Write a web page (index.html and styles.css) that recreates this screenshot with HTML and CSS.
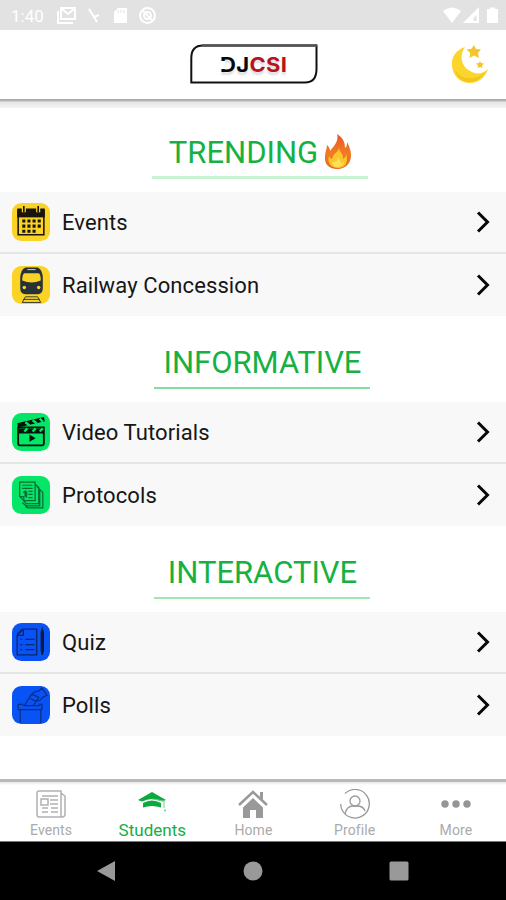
FILE: index.html
```html
<!DOCTYPE html>
<html lang="en">
<head>
<meta charset="utf-8">
<title>DJCSI Students</title>
<link rel="stylesheet" href="styles.css">
</head>
<body>
<div class="status">
  <span class="time">1:40</span>
  <svg class="status-left" width="102" height="18" viewBox="56 7 102 18" fill="none" stroke="#fff" stroke-width="2">
    <path d="M58 11v12h15"/><rect x="61" y="8" width="14" height="11"/><path d="M62 9l6 5 6-5"/>
    <path d="M89 9l8 13M94 17l5-2" stroke-width="2.2"/>
    <path d="M118 8h9v15h-13V12z" fill="#fff" stroke="none"/><path d="M118 10v3M121 10v3M124 10v3" stroke="#e2e2e2" stroke-width="1"/>
    <circle cx="147.500" cy="15.500" r="7.500"/><circle cx="147.500" cy="15.500" r="3.500"/><path d="M143 11l9 9"/>
  </svg>
  <svg class="status-right" width="56" height="18" viewBox="443 7 56 18" fill="#fff">
    <path d="M443 11q9-7 18 0l-9 12z"/><path fill-rule="evenodd" d="M479 7v16h-16zM476.500 15v6h-3v-3z"/><path d="M487 9h3V7.500h5V9h3v14h-11z"/>
  </svg>
</div>
<header class="header">
  <div class="logo">
    <svg class="logo-frame" width="128" height="40" viewBox="0 0 128 40" fill="none"><path d="M1.300 38.500V14Q1.300 1.500 13 1.500H126.500V25Q126.500 38.500 115 38.500Z" stroke="#111" stroke-width="2"/><path d="M12 1.500h115" stroke="#555" stroke-width="2.500"/></svg>
    <span class="wordmark"><span class="dj">DJ</span><span class="csi">CSI</span></span>
  </div>
  <svg class="moon" width="38" height="40" viewBox="451 44 38 40">
    <path d="M465 47C456 50 451 57 452 66c1 10 8 17 18 17 8 0 15-5 18-14-5 5-12 6-18 2-9-5-11-15-5-24z" fill="#fbd52c"/>
    <path d="M455 69c3 7 10 10 17 9 6 0 10-3 13-7-2 6-8 11-15 11-8 0-14-5-15-13z" fill="#f5c51b"/>
    <path d="M474 45l2 4 5 .5-3 3.500 1 5-5-2.500-4.500 2.500.7-5-3.700-3.500 5-.7z" fill="#f4c52c"/><path d="M480 61l1 2 3 .5-2 2 .5 2.500-2.500-1-2.500 1 .5-2.500-2-2 3-.5z" fill="#f4c52c"/>
  </svg>
</header>
<main class="content">
  <section>
    <h2 class="trending"><span>TRENDING</span>
      <svg width="28" height="36" viewBox="0 0 28 36"><defs><linearGradient id="flame" x1="0" y1="0" x2="0" y2="1"><stop stop-color="#e9572a"/><stop offset=".55" stop-color="#f27b22"/><stop offset="1" stop-color="#e66a1c"/></linearGradient></defs><path d="M13 0c6 4 8 8 8 14 2-1 2-4 2-6 5 9 5 16 2 21-3 4-7 6-12 6C5 35 0 30 1 22c0-4 2-7 2-11 2 2 3 4 3 6C10 12 15 7 13 0z" fill="url(#flame)"/><path d="M15 13c0 5 5 7 4 12 2-1 3-3 3-5 3 8-1 14-8 14S3 29 5 22c1 2 2 3 3 3 1-6 7-7 7-12z" fill="#fcc52e"/><path d="M14 22c1 4 3 4 3 8l3-3c-1 8-11 8-12 1 4 1 6-2 6-6z" fill="#ffdf55"/></svg>
    </h2>
    <ul>
      <li><svg class="tile" viewBox="0 0 37 37"><rect width="37" height="37" rx="9" fill="#fbd324"/><path d="M6 6h25v25H6z" fill="none" stroke="#17150c" stroke-width="1.500"/><path d="M5 6h27v8H5z" fill="#17150c"/><path d="M11.500 3v6M25.500 3v6" stroke="#fbd324" stroke-width="4"/><path d="M11.500 3v6M25.500 3v6" stroke="#17150c" stroke-width="1.600"/><path d="M10 17.500h19M10 22.500h19M10 27.500h14" stroke="#17150c" stroke-width="3" stroke-dasharray="3 2"/></svg><span>Events</span><svg class="chev" viewBox="0 0 14 22"><path d="M2 1.500l9.500 9.500L2 20.500"/></svg></li>
      <li><svg class="tile" viewBox="0 0 37 37"><rect width="37" height="37" rx="9" fill="#fbd324"/><path d="M13 1.500h12q5 2 5 11v9q0 6-5 6H13q-5 0-5-6v-9q0-9 5-11z" fill="#263139"/><path d="M12 7h14q2 1 2 7-9 4-18 0 0-6 2-7z" fill="#fbd324"/><path d="M15 3.500h8" stroke="#fbd324"/><circle cx="12" cy="21" r="1.700" fill="#fbd324"/><circle cx="26" cy="21" r="1.700" fill="#fbd324"/><path d="M13 30h12M11 32.500h16M10 35.500h18M13 30l-3 5.500M25 30l3 5.500" stroke="#263139" stroke-width=".9"/></svg><span>Railway Concession</span><svg class="chev" viewBox="0 0 14 22"><path d="M2 1.500l9.500 9.500L2 20.500"/></svg></li>
    </ul>
  </section>
  <section>
    <h2 class="informative"><span>INFORMATIVE</span></h2>
    <ul>
      <li><svg class="tile" viewBox="0 0 37 37"><rect width="37" height="37" rx="9" fill="#05e568"/><path d="M6 14h25v16q0 1.500-1.500 1.500h-22Q6 31.500 6 30zM6 19h25" fill="none" stroke="#06130b" stroke-width="1.800"/><path d="M6 14l-1-4 26-6 1 4-21 5z" fill="#06130b"/><path d="M6 15h25v4H6z" fill="#06130b"/><path d="M13 9l4 3M20 7l4 3M27 5.500l3 3M12 18l3-3M20 18l3-3M27 18l3-3" stroke="#05e568" stroke-width="2.300"/><path d="M17 21l6 3.500-6 3.500z" fill="#06130b"/></svg><span>Video Tutorials</span><svg class="chev" viewBox="0 0 14 22"><path d="M2 1.500l9.500 9.500L2 20.500"/></svg></li>
      <li><svg class="tile" viewBox="0 0 37 37"><rect width="37" height="37" rx="9" fill="#05e568"/><g fill="none" stroke="#086c36" stroke-width="1.200"><path d="M7.500 6h15v18h-11l-4-4zM7.500 20h4v4M10 26l4 3h13V13l-3-3M13 30l3 1h14V16l-3-3M22.500 8l3.500 3v16H14l-3-3M10 9h10M10 12h10M16 15h4M16 18h4M16 21h4"/><path d="M11 16l2-1v5M14 15v6" stroke-width="1.600"/></g></svg><span>Protocols</span><svg class="chev" viewBox="0 0 14 22"><path d="M2 1.500l9.500 9.500L2 20.500"/></svg></li>
    </ul>
  </section>
  <section>
    <h2 class="interactive"><span>INTERACTIVE</span></h2>
    <ul>
      <li><svg class="tile" viewBox="0 0 37 37"><rect width="37" height="37" rx="9" fill="#0952f4"/><g fill="none" stroke="#062974" stroke-width="1.300"><path d="M11 6h13v25H5V12zM11 6v6H5M8 16h2M8 21h2M8 26h2M13 16h9M13 21h9M13 26h9"/><path d="M5 11l5-5"/><path d="M29.500 6l1 3v18l-1 4-1-4V9z" fill="#071c47" stroke="#071c47"/></g></svg><span>Quiz</span><svg class="chev" viewBox="0 0 14 22"><path d="M2 1.500l9.500 9.500L2 20.500"/></svg></li>
      <li><svg class="tile" viewBox="0 0 37 37"><rect width="37" height="37" rx="9" fill="#0952f4"/><g fill="none" stroke="#062f88" stroke-width="1.200"><path d="M8 23v13M28 23v13M6 18h5M26 18h3v5H6v-5M11 19h16M12 19l7-11 7 3-5 8M18 10q3-5 8-5l3-3 5 7-4 2q-3 5-9 3l-3-2M21 9l4 1"/></g></svg><span>Polls</span><svg class="chev" viewBox="0 0 14 22"><path d="M2 1.500l9.500 9.500L2 20.500"/></svg></li>
    </ul>
  </section>
</main>
<nav class="tabs">
  <div class="tab"><svg viewBox="0 0 32 30"><g fill="none" stroke="#b1b1b1" stroke-width="1.500"><path d="M3 2h23v26H4q-2 0-2-3V4q0-2 2-2zM26 4l4 3v18q0 3-3 3h-4M7 7h16M15 11h8M15 15h8M16 19h7M16 23h7M7 19h6M7 23h6"/><rect x="6" y="10" width="7" height="6"/></g></svg><span>Events</span></div>
  <div class="tab active"><svg viewBox="0 0 32 30"><path d="M16 3l14 8-4 1.500q-10-5-20 0L2 11zM7 14q9-5 18 0v4.500q-9-3-18 0z" fill="#0caa3d"/><path d="M16 10l12 2v7" stroke="#75cf90" fill="none"/><circle cx="29" cy="21.500" r="1.100" fill="#75cf90"/></svg><span>Students</span></div>
  <div class="tab"><svg viewBox="0 0 32 30"><path d="M2 16L16 3l14 13" fill="none" stroke="#999" stroke-width="2.500"/><path d="M23 3h3v8l-3-3zM6 18.500l10-9.500 10 9.500V29h-7v-8h-6v8H6z" fill="#999"/></svg><span>Home</span></div>
  <div class="tab"><svg viewBox="0 0 32 30"><g fill="none" stroke="#999" stroke-width="1.300"><path d="M6 4.500A14.300 14.300 0 1 1 3.700 22M1.700 15q0 4 2 7"/><circle cx="16" cy="12" r="5"/><path d="M6 25c1-5 4-8 8-8h4c4 0 7 2 8 5"/></g></svg><span>Profile</span></div>
  <div class="tab"><svg viewBox="0 0 32 30" fill="#959595"><circle cx="5" cy="15" r="3.700"/><circle cx="16" cy="15" r="3.700"/><circle cx="27" cy="15" r="3.700"/></svg><span>More</span></div>
</nav>
<div class="system">
  <svg viewBox="0 0 22 22"><path d="M2 11L20 1v20z"/></svg>
  <svg viewBox="0 0 22 22"><circle cx="11" cy="11" r="9.500"/></svg>
  <svg viewBox="0 0 22 22"><rect x="1.500" y="1.500" width="19" height="19" rx="1.500"/></svg>
</div>
</body>
</html>
```
FILE: styles.css
```css
* { box-sizing: border-box; }
body { margin: 0; width: 506px; height: 900px; overflow: hidden; display: flex; flex-direction: column; background: #fff; color: #161616; font-family: Roboto, sans-serif; }
svg { display: block; flex: none; }
.status { height: 30px; background: #e2e2e2; display: flex; align-items: center; padding: 1px 7px 0 11px; color: #fff; }
.time { width: 45px; font-size: 17px; line-height: 28px; }
.status-right { margin-left: auto; }
.header { height: 78px; display: grid; grid-template-columns: 1fr 128px 1fr; align-items: start; padding: 14px 0 0 1px; background: linear-gradient(#fff 69px, #a8aaaa 69px, #b4b6b6 71px, #e5e5e5 72px, #f4f4f4 78px); }
.logo { grid-column: 2; position: relative; height: 40px; }
.logo-frame { position: absolute; inset: 0; }
.wordmark { position: absolute; left: 30px; top: 9px; font: 700 20px/24px Inter, sans-serif; letter-spacing: .3px; white-space: nowrap; text-shadow: 0 3px 2px #ddd; transform: scaleX(1.1); transform-origin: left; }
.dj { color: #080808; }
.csi { color: #b7131c; }
.dj::before { content: ""; position: absolute; left: 0; top: 8px; width: 5px; height: 8px; background: #fff; }
.moon { justify-self: end; margin-right: 17px; }
.content { height: 671px; }
section { height: 210px; }
h2 { margin: 0 auto; width: 216px; height: 71px; padding: 27px 0 0 1px; font-size: 31px; line-height: 36px; font-weight: 390; color: #16b142; border-bottom: 2px solid #9ee6b3; display: flex; justify-content: center; }
.trending { border-color: #c8f2d2; border-width: 3px; margin-left: 152px; gap: 6px; }
.trending svg { margin-top: -1px; }
.informative, .interactive { margin-left: 154px; }
.informative { border-color: #84dda0; }
ul { margin: 13px 0 0; padding: 0; list-style: none; background: #f8f8f8; }
li { height: 62px; padding: 0 16px 0 12px; display: flex; align-items: center; }
li:first-child { border-bottom: 2px solid #e5e6e6; }
.tile { width: 38px; height: 38px; }
li span { margin: 1px 0 0 12px; font-size: 22px; font-weight: 380; letter-spacing: .1px; }
.chev { width: 14px; height: 22px; margin-left: auto; fill: none; stroke: #080808; stroke-width: 3; }
.tabs { height: 63px; padding-top: 10px; display: grid; grid-template-columns: repeat(5, 1fr); background: linear-gradient(#b9b9b9 0 3px, #e5e5e5 3px, #fff 6px); border-bottom: 1px solid #777; }
.tab { display: flex; flex-direction: column; align-items: center; color: #aaa; font-size: 14px; line-height: 20px; letter-spacing: .1px; padding-left: 1px; }
.tab span { margin-top: 1px; }
.tab svg { width: 32px; height: 30px; }
.active { color: #16ad42; font-size: 17px; letter-spacing: 0; }
.system { height: 58px; background: #000; display: grid; grid-template-columns: 149px 1fr 149px; align-items: center; fill: #999; }
.system svg { width: 22px; height: 22px; justify-self: center; }
.system svg:first-child { justify-self: end; margin-right: 32px; }
.system svg:last-child { justify-self: start; margin-left: 31px; }
```
